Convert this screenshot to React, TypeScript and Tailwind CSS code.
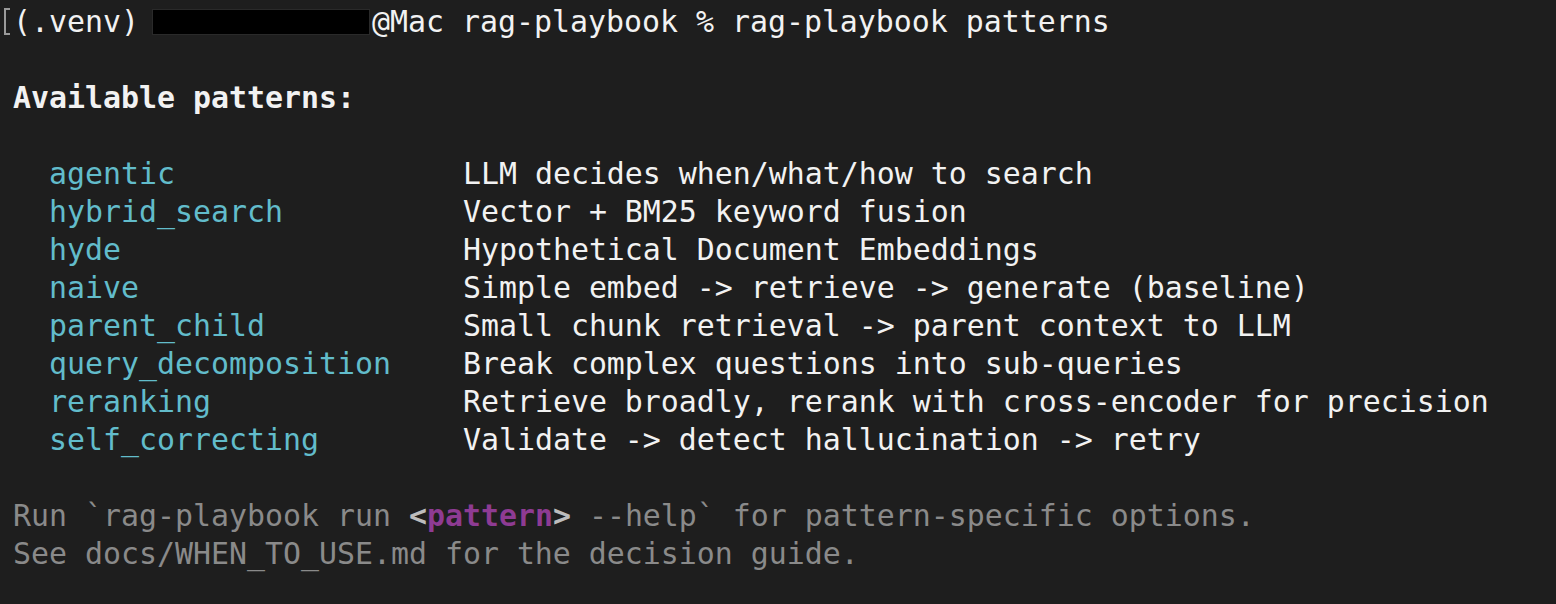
const patterns: [string, string][] = [
  ["agentic", "LLM decides when/what/how to search"],
  ["hybrid_search", "Vector + BM25 keyword fusion"],
  ["hyde", "Hypothetical Document Embeddings"],
  ["naive", "Simple embed -> retrieve -> generate (baseline)"],
  ["parent_child", "Small chunk retrieval -> parent context to LLM"],
  ["query_decomposition", "Break complex questions into sub-queries"],
  ["reranking", "Retrieve broadly, rerank with cross-encoder for precision"],
  ["self_correcting", "Validate -> detect hallucination -> retry"],
];

const Line: React.FC<{ children?: React.ReactNode }> = ({ children }) => (
  <div className="h-[38px] leading-[38px] whitespace-pre">{children ?? " "}</div>
);

export default function App() {
  return (
    <div
      className="w-[1556px] h-[604px] bg-[#1e1e1e] text-[#f2f2f2] text-[29.9px] pt-[3px] pl-[13px] relative overflow-hidden"
      style={{ fontFamily: '"DejaVu Sans Mono", "Liberation Mono", monospace' }}
    >
      <span className="absolute left-[4px] top-[8px] h-[27px] w-[6px] border-l-2 border-t-2 border-b-2 border-[#9a9a9a]" />
      <Line>
        (.venv){" "}
        <span className="inline-block align-middle w-[218px] h-[26px] bg-black -ml-[5px] mr-[2px] -mt-[4px] border border-[#2a2a2a]" />
        @Mac rag-playbook % rag-playbook patterns
      </Line>
      <Line />
      <Line>
        <span className="font-bold">Available patterns:</span>
      </Line>
      <Line />
      {patterns.map(([name, desc]) => (
        <Line key={name}>
          {"  "}
          <span className="text-[#62bccb]">{name.padEnd(23, " ")}</span>
          {desc}
        </Line>
      ))}
      <Line />
      <div className="text-[#8a8a8a]">
        <Line>
          Run `rag-playbook run <span className="font-bold text-[#bdbdbd]">&lt;</span>
          <span className="font-bold text-[#8e3b93]">pattern</span>
          <span className="font-bold text-[#bdbdbd]">&gt;</span> --help` for pattern-specific options.
        </Line>
        <Line>See docs/WHEN_TO_USE.md for the decision guide.</Line>
      </div>
    </div>
  );
}
